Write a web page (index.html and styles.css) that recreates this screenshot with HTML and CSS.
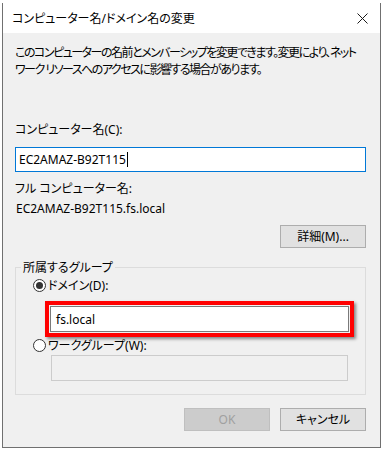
FILE: index.html
```html
<!DOCTYPE html>
<html lang="ja">
<head>
    <meta charset="UTF-8">
    <meta name="viewport" content="width=device-width, initial-scale=1.0">
    <title>コンピューター名/ドメイン名の変更</title>
    <link rel="stylesheet" href="styles.css">
</head>
<body>
    <div class="window">
        <div class="titlebar">
            <span class="title">コンピューター名/ドメイン名の変更</span>
            <svg class="close" width="11" height="11" viewBox="0 0 11 11">
                <path d="M0.5 0.5 L10.5 10.5 M10.5 0.5 L0.5 10.5" stroke="#1a1a1a" stroke-width="1" fill="none"/>
            </svg>
        </div>
        <div class="content">
            <p class="desc">このコンピューターの名前とメンバーシップを変更できます。変更により、ネット<br>ワーク リソースへのアクセスに影響する場合があります。</p>

            <div class="field-label">コンピューター名(C):</div>
            <div class="textbox focused">EC2AMAZ-B92T115<span class="caret"></span></div>

            <div class="full-label">フル コンピューター名:</div>
            <div class="full-name">EC2AMAZ-B92T115.fs.local</div>

            <div class="row-right">
                <button class="btn">詳細(M)...</button>
            </div>

            <fieldset class="group">
                <legend>所属するグループ</legend>
                <div class="radio-row">
                    <span class="radio checked"></span>ドメイン(D):
                </div>
                <div class="highlight">
                    <div class="textbox">fs.local</div>
                </div>
                <div class="radio-row">
                    <span class="radio"></span>ワークグループ(W):
                </div>
                <div class="textbox disabled"></div>
            </fieldset>

            <div class="actions">
                <button class="btn" disabled>OK</button>
                <button class="btn">キャンセル</button>
            </div>
        </div>
    </div>
</body>
</html>
```

FILE: styles.css
```css
body {
    margin: 0;
    background: #ffffff;
    font-family: "Noto Sans", "Noto Sans CJK JP", sans-serif;
    font-size: 12px;
    line-height: 17px;
    color: #000000;
    font-feature-settings: "palt";
}
.window {
    box-sizing: border-box;
    width: 379px;
    height: 445px;
    margin: 3px 0 0 2px;
    background: #f0f0f0;
    border: 1px solid #707070;
    border-top: none;
    display: flex;
    flex-direction: column;
}
.titlebar {
    height: 30px;
    background: #ffffff;
    display: flex;
    align-items: center;
    justify-content: space-between;
    padding: 0 12px 0 9px;
}
.title {
    padding-top: 1px;
}
.close {
    display: block;
    margin-top: 1px;
}
.content {
    padding: 11px 14px 0 12px;
}
.desc {
    margin: 0;
    white-space: nowrap;
    letter-spacing: -1.5px;
}
.field-label {
    margin-top: 43px;
}
.textbox {
    box-sizing: border-box;
    height: 26px;
    background: #ffffff;
    border: 1px solid #7a7a7a;
    padding: 3px 4px;
    display: flex;
    align-items: center;
}
.textbox.focused {
    margin-top: 9px;
    height: 25px;
    border-color: #0078d7;
    padding-left: 3px;
}
.caret {
    display: inline-block;
    width: 1px;
    height: 15px;
    background: #000000;
    margin-left: 1px;
}
.full-label {
    margin-top: 8px;
}
.full-name {
    margin-top: 3px;
    padding-left: 1px;
}
.row-right {
    display: flex;
    justify-content: flex-end;
    margin-top: 8px;
}
.btn {
    box-sizing: border-box;
    width: 86px;
    height: 23px;
    background: #e1e1e1;
    border: 1px solid #adadad;
    font: inherit;
    color: #000000;
    padding: 0;
}
.btn:disabled {
    background: #cccccc;
    border-color: #bfbfbf;
    color: #a0a0a0;
}
.group {
    margin: 11px 0 0 0;
    padding: 1px 14px 13px 5px;
    border: 1px solid #dcdcdc;
    min-width: 0;
}
.group legend {
    padding: 0 2px;
}
.radio-row {
    display: flex;
    align-items: center;
    gap: 2px;
    margin-left: 12px;
}
.radio {
    box-sizing: border-box;
    width: 13px;
    height: 13px;
    border: 1px solid #333333;
    border-radius: 50%;
    background: #ffffff;
    display: flex;
    align-items: center;
    justify-content: center;
}
.radio.checked::after {
    content: "";
    width: 7px;
    height: 7px;
    border-radius: 50%;
    background: #333333;
}
.highlight {
    margin: 7px 0 0 24px;
    width: 309px;
    box-sizing: border-box;
    border: 4px solid #ff0000;
    padding: 1px;
    box-shadow: 2px 2px 3px rgba(0, 0, 0, 0.45);
}
.highlight .textbox {
    padding-left: 5px;
}
.textbox.disabled {
    margin: 1px 0 0 30px;
    width: 297px;
    background: #f0f0f0;
    border-color: #cccccc;
}
.actions {
    display: flex;
    justify-content: flex-end;
    gap: 10px;
    margin-top: 13px;
}
```
